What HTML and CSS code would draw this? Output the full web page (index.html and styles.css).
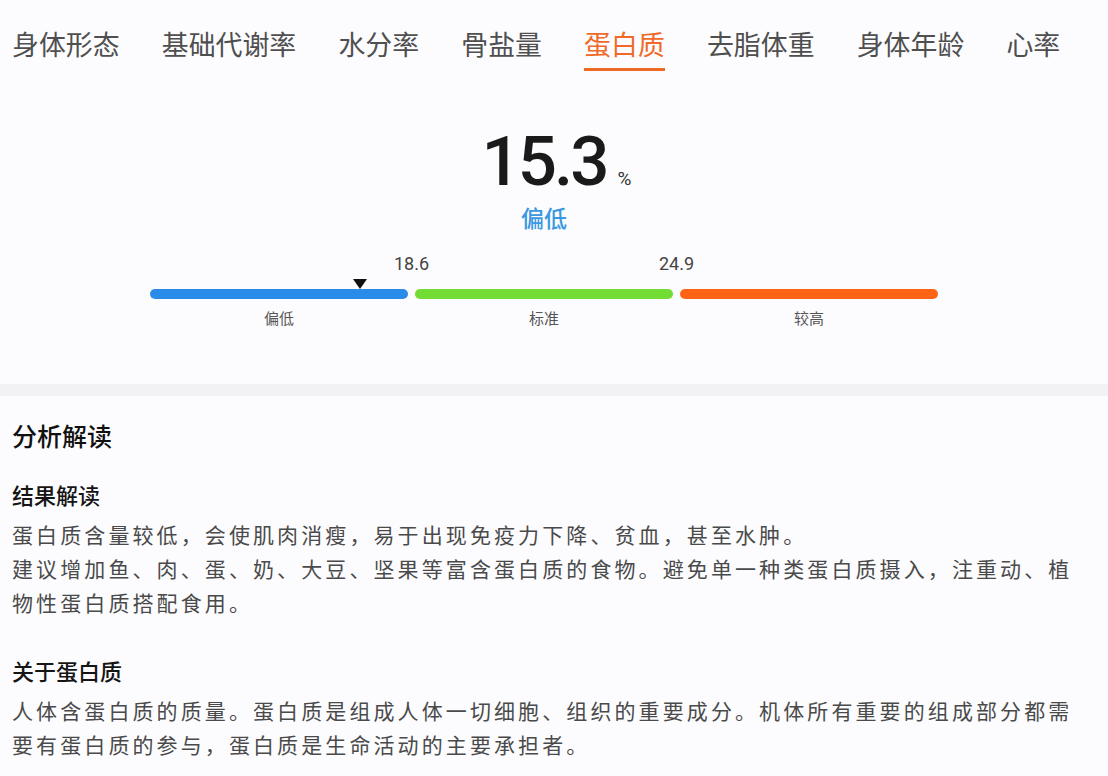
FILE: index.html
```html
<!DOCTYPE html>
<html lang="zh-CN">
<head>
<meta charset="utf-8">
<title>蛋白质</title>
<link rel="stylesheet" href="styles.css">
</head>
<body>
<nav class="tabs">
  <span class="tab">身体形态</span>
  <span class="tab">基础代谢率</span>
  <span class="tab">水分率</span>
  <span class="tab">骨盐量</span>
  <span class="tab active">蛋白质</span>
  <span class="tab">去脂体重</span>
  <span class="tab">身体年龄</span>
  <span class="tab">心率</span>
</nav>

<section class="summary">
  <div class="value-row">
    <span></span>
    <span class="value">15.3</span>
    <span class="unit">%</span>
  </div>
  <div class="status">偏低</div>

  <div class="scale">
    <div class="ticks">
      <span class="tick">18.6</span>
      <span class="tick">24.9</span>
      <span></span>
    </div>
    <div class="bars">
      <div class="bar low"><span class="marker" style="left: 81.4%"></span></div>
      <div class="bar normal"></div>
      <div class="bar high"></div>
    </div>
    <div class="labels">
      <span>偏低</span>
      <span>标准</span>
      <span>较高</span>
    </div>
  </div>
</section>

<div class="band"></div>

<section class="analysis">
  <h2 class="title">分析解读</h2>
  <h3 class="subtitle">结果解读</h3>
  <p class="text">蛋白质含量较低，会使肌肉消瘦，易于出现免疫力下降、贫血，甚至水肿。<br>建议增加鱼、肉、蛋、奶、大豆、坚果等富含蛋白质的食物。避免单一种类蛋白质摄入，注重动、植物性蛋白质搭配食用。</p>
  <h3 class="subtitle about">关于蛋白质</h3>
  <p class="text">人体含蛋白质的质量。蛋白质是组成人体一切细胞、组织的重要成分。机体所有重要的组成部分都需要有蛋白质的参与，蛋白质是生命活动的主要承担者。</p>
</section>
</body>
</html>
```

FILE: styles.css
```css
* { box-sizing: border-box; }
html, body { margin: 0; padding: 0; }
body {
  background: #fcfcfe;
  font-family: "Noto Sans CJK SC", "Noto Sans", sans-serif;
  color: #333;
  width: 1108px;
  height: 776px;
  overflow: hidden;
}

.tabs {
  display: flex;
  gap: 42.2px;
  padding: 27px 0 0 12px;
  height: 88px;
  white-space: nowrap;
}
.tab {
  font-size: 26.9px;
  line-height: 33px;
  color: #4f4f4f;
  padding-bottom: 8px;
  border-bottom: 3px solid transparent;
  height: 44px;
}
.tab.active {
  color: #ef6a2a;
  border-bottom-color: #f06a26;
}

.summary {
  display: flex;
  flex-direction: column;
  align-items: center;
  padding-right: 20px;
  padding-top: 36px;
  height: 296px;
}
.value-row {
  display: grid;
  grid-template-columns: 1fr auto 1fr;
  align-items: baseline;
  width: 400px;
  height: 78px;
}
.value {
  font-family: Roboto, "Liberation Sans", sans-serif;
  font-weight: 500;
  font-size: 69px;
  line-height: 76px;
  letter-spacing: -3px;
  color: #1a1a1a;
}
.unit {
  font-family: Roboto, "Liberation Sans", sans-serif;
  font-size: 19px;
  color: #333;
  padding-left: 11px;
}
.status {
  margin-top: 0;
  font-size: 23px;
  line-height: 30px;
  font-weight: 500;
  color: #3a98e0;
}

.scale {
  width: 788px;
  margin-top: 21px;
}
.ticks, .bars, .labels {
  display: grid;
  grid-template-columns: 1fr 1fr 1fr;
  column-gap: 7px;
}
.tick {
  justify-self: end;
  transform: translateX(calc(50% + 3.5px));
  font-family: Roboto, "Liberation Sans", sans-serif;
  font-size: 18px;
  line-height: 22px;
  color: #444;
}
.ticks { height: 36px; }
.bar {
  position: relative;
  height: 10px;
  border-radius: 5px;
}
.bar.low { background: #2a8ce8; }
.bar.normal { background: #73dc35; }
.bar.high { background: #ff6414; }
.marker {
  position: absolute;
  bottom: 10px;
  width: 0;
  height: 0;
  margin-left: -7px;
  border-left: 7px solid transparent;
  border-right: 7px solid transparent;
  border-top: 10px solid #111;
}
.labels {
  margin-top: 8px;
  font-size: 15px;
  line-height: 22px;
  color: #555;
  text-align: center;
}

.band {
  height: 12px;
  background: #f2f2f4;
}

.analysis {
  padding: 22px 30px 0 12px;
}
.title {
  margin: 0;
  font-size: 25px;
  line-height: 34px;
  font-weight: 500;
  color: #111;
}
.subtitle {
  margin: 26px 0 7px;
  font-size: 22px;
  line-height: 32px;
  font-weight: 500;
  color: #151515;
}
.subtitle.about { margin-top: 35px; }
.text {
  margin: 0;
  font-size: 21px;
  line-height: 34px;
  letter-spacing: 3.1px;
  color: #4a4a4a;
}
```
